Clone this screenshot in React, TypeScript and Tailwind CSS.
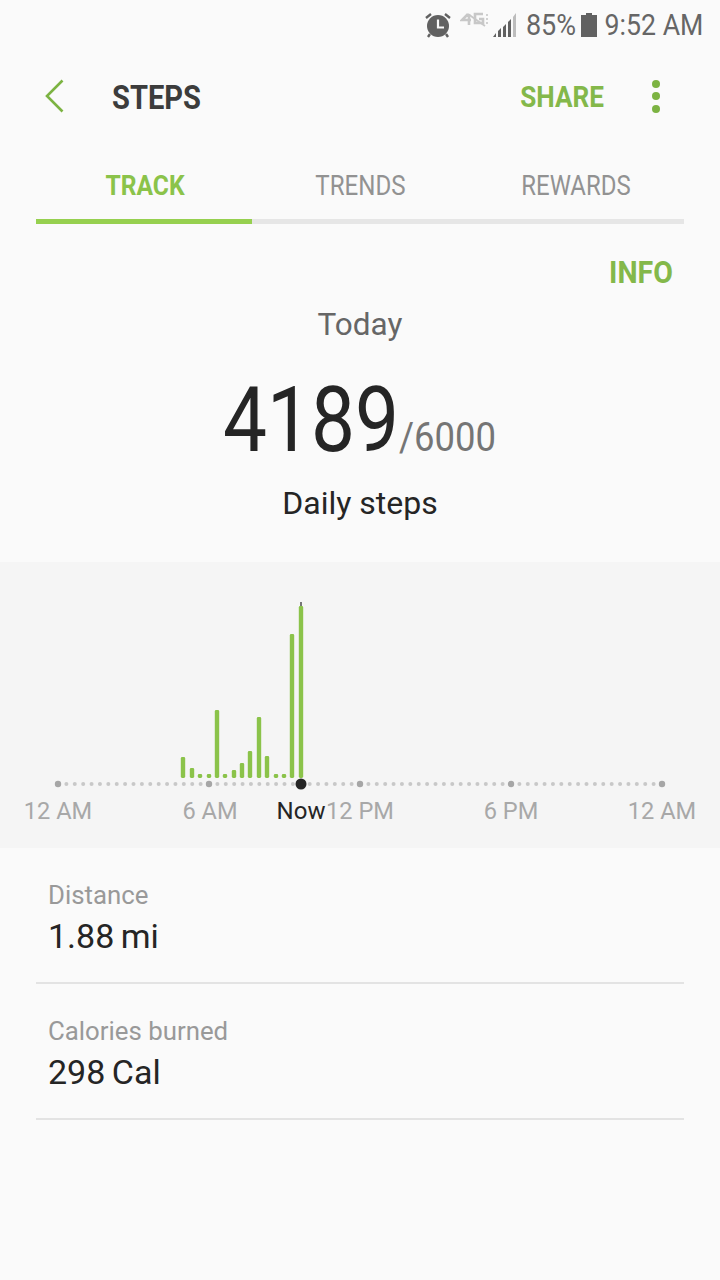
const F = { fontFamily: "Roboto, sans-serif" };
const bars: [number, number][] = [[183,21],[192,10],[200,4],[209,4],[217,68],[225,4],[234,8],[242,15],[250,27],[259,61],[267,22],[276,4],[284,4],[292,144],[301,172]];
const dots = Array.from({ length: 73 }, (_, i) => 58 + i * (604 / 72));

function Cond({ children, className }: { children: React.ReactNode; className: string }) {
  return <span className={`inline-flex justify-center whitespace-nowrap origin-center ${className}`}>{children}</span>;
}

function Status() {
  return (
    <div className="h-12 pt-[1px] flex items-center justify-end pr-[17px] text-[#666] text-[30px] leading-none">
      <svg width="28" height="26" viewBox="0 0 28 26" className="mr-[8px]" fill="#616161">
        <circle cx="14" cy="14" r="11" />
        <path d="M14 7.5v8h6" stroke="#fafafa" strokeWidth="2.2" fill="none" />
        <path d="M2 6l5-4M26 6l-5-4M6 22l-2 3M22 22l2 3" stroke="#616161" strokeWidth="2.4" />
      </svg>
      <svg width="30" height="22" viewBox="0 0 30 22" className="mr-[2px] -translate-y-[3px]" fill="none" stroke="#c8c8c8" strokeWidth="2.6">
        <path d="M8 3L2 9h9M9 3v11M23 3h-8v9h8V8h-4" />
        <path d="M8 3l17 12" strokeWidth="1.8" />
        <path d="M27 3v2M27 7v2M27 11v2" strokeWidth="1.6" />
      </svg>
      <svg width="26" height="26" viewBox="0 0 26 26" className="mr-[9px] -translate-x-[1px]">
        <path d="M2 25h3v-4zM7 25h3v-9l-3 3zM12 25h3V12l-3 3zM17 25h3V7l-3 3z" fill="#616161" />
        <path d="M22 25h3V1l-3 4z" fill="#bdbdbd" />
      </svg>
      <Cond className="w-[48px] mr-[6px] scale-x-[0.9]">85%</Cond>
      <svg width="16" height="24" viewBox="0 0 16 24" className="mr-[8px]" fill="#616161">
        <path d="M5 0h6v2h5v22H0V2h5z" />
      </svg>
      <Cond className="w-[98px] scale-x-[0.89]">9:52 AM</Cond>
    </div>
  );
}

function Stat({ label, value }: { label: string; value: string }) {
  return (
    <div className="mx-9 h-[136px] border-b-2 border-[#e3e3e3] px-3 pt-[31px]">
      <div className="text-[25.8px] leading-8 text-[#999]">{label}</div>
      <div className="mt-[5px] text-[34px] leading-[40px] [word-spacing:-2px] text-[#252525]">{value}</div>
    </div>
  );
}

export default function App() {
  return (
    <div style={F} className="w-[720px] h-[1280px] overflow-hidden bg-[#fafafa]">
      <Status />
      <div className="h-[96px] flex items-center">
        <svg width="20" height="34" viewBox="0 0 20 34" className="ml-[45px]" fill="none" stroke="#7cb342" strokeWidth="2.6">
          <path d="M17.5 1.5L2 17l15.5 15.5" />
        </svg>
        <Cond className="ml-[47px] mt-[2px] w-[89px] scale-x-[0.855] text-[34px] font-bold text-[#3c3c3c]">STEPS</Cond>
        <div className="flex-1" />
        <Cond className="w-[84px] scale-x-[0.87] text-[30px] font-bold text-[#84b84a]">SHARE</Cond>
        <div className="ml-[48px] mr-[60px] flex flex-col gap-[4.5px]">
          <div className="w-[8px] h-[8px] rounded-full bg-[#7cb342]" />
          <div className="w-[8px] h-[8px] rounded-full bg-[#7cb342]" />
          <div className="w-[8px] h-[8px] rounded-full bg-[#7cb342]" />
        </div>
      </div>
      <div className="mx-9 h-[80px] flex border-b-[5px] border-[#e6e6e6] relative">
        <div className="w-[216px] pt-[23px] pl-[1px] text-center">
          <Cond className="scale-x-[0.88] text-[28px] leading-[38px] font-bold text-[#8bc34a]">TRACK</Cond>
        </div>
        <div className="w-[216px] pt-[23px] text-center">
          <Cond className="scale-x-[0.86] text-[28px] leading-[38px] text-[#929292]">TRENDS</Cond>
        </div>
        <div className="w-[216px] pt-[23px] text-center">
          <Cond className="scale-x-[0.855] text-[28px] leading-[38px] text-[#929292]">REWARDS</Cond>
        </div>
        <div className="absolute left-0 -bottom-[5px] w-[216px] h-[5px] bg-[#96d04f]" />
      </div>
      <div className="h-[338px] flex flex-col items-center">
        <div className="self-end mr-[48px] mt-[29px] h-[40px] leading-[40px]">
          <Cond className="w-[62px] scale-x-[0.92] text-[31px] font-bold text-[#84b84a]">INFO</Cond>
        </div>
        <div className="mt-[12px] text-[31.5px] leading-[40px] text-[#666]">Today</div>
        <div className="mt-[27px] flex items-baseline h-[96px] leading-[96px]">
          <Cond className="w-[174px] scale-x-[0.86] text-[91px] text-[#252525]">4189</Cond>
          <Cond className="ml-[1px] w-[97px] scale-x-[0.89] text-[41px] text-[#757575]">/6000</Cond>
        </div>
        <div className="mt-[15px] text-[32px] leading-[40px] text-[#252525]">Daily steps</div>
      </div>
      <div className="h-[286px] bg-[#f5f5f5] relative">
        <svg width="720" height="286" viewBox="0 562 720 286" className="block">
          {dots.map((x, i) => (
            <circle key={i} cx={x} cy={784} r={i % 18 === 0 ? 3.2 : 2} fill={i % 18 === 0 ? "#a6a6a6" : "#c8c8c8"} />
          ))}
          <rect x="300" y="602" width="2" height="6" fill="#777" />
          {bars.map(([x, h]) => (
            <rect key={x} x={x - 2.2} y={778 - h} width="4.4" height={h} rx="1.4" fill="#8bc34a" />
          ))}
          <circle cx="301" cy="784" r="5.5" fill="#252525" />
        </svg>
        {[["12 AM", 58], ["6 AM", 210], ["12 PM", 360], ["6 PM", 511], ["12 AM", 662]].map(([t, x]) => (
          <span key={String(x)} style={{ left: Number(x) }} className="absolute top-[233px] -translate-x-1/2 text-[23.6px] leading-[32px] whitespace-nowrap text-[#a8a8a8]">{t}</span>
        ))}
        <span className="absolute top-[233px] left-[301px] -translate-x-1/2 text-[24px] leading-[32px] text-[#252525]">Now</span>
      </div>
      <Stat label="Distance" value="1.88 mi" />
      <Stat label="Calories burned" value="298 Cal" />
    </div>
  );
}
